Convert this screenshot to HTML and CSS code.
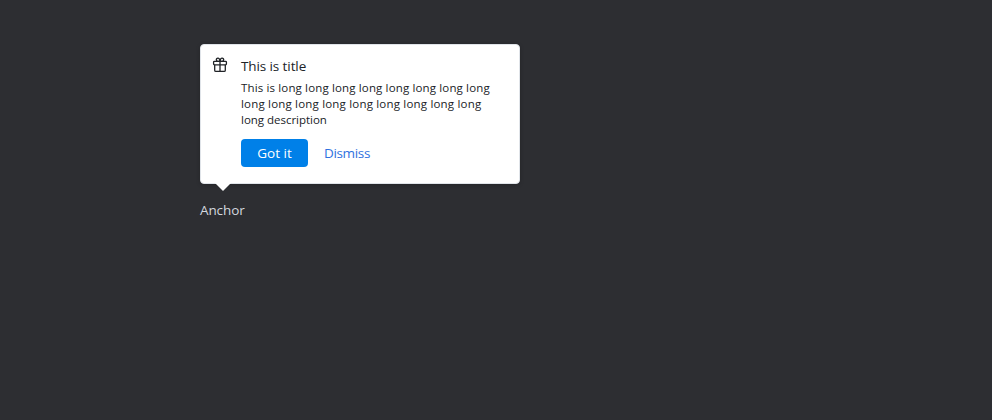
FILE: index.html
```html
<!DOCTYPE html>
<html lang="en">
<head>
<meta charset="utf-8">
<title>Popover</title>
<link rel="stylesheet" href="styles.css">
</head>
<body>
<main class="stage">
  <section class="popover">
    <svg class="icon" viewBox="0 0 16 16" width="16" height="16" fill="none" stroke="#202327" stroke-width="1.3" stroke-linejoin="round">
      <rect x="1.6" y="4.3" width="12.8" height="3.5" rx=".8"/>
      <path d="M2.7 7.8v5.4c0 .7.5 1.2 1.2 1.2h8.2c.7 0 1.2-.5 1.2-1.2V7.8M8 4.3v10.1M8 4.3H5.7a1.6 1.6 0 1 1 1.7-2.2L8 4.3l.6-2.2a1.6 1.6 0 1 1 1.7 2.2H8"/>
    </svg>
    <div class="content">
      <h1 class="title"><span>This is title</span></h1>
      <p class="description"><span class="l1">This is long long long long long long long long</span><br><span class="l2">long long long long long long long long long</span><br><span class="l3">long description</span></p>
      <div class="actions">
        <button class="btn primary"><span>Got it</span></button>
        <button class="btn link"><span>Dismiss</span></button>
      </div>
    </div>
    <svg class="arrow" viewBox="0 0 16 8" width="16" height="8"><path d="M0 0h16L8 8z" fill="#fff"/></svg>
  </section>
  <div class="anchor"><span>Anchor</span></div>
</main>
</body>
</html>
```
FILE: styles.css
```css
* { box-sizing: border-box; }
body {
  margin: 0;
  background: #2d2e32;
  font-family: "Open Sans", "Noto Sans", sans-serif;
}
.stage { padding: 44px 0 0 200px; }
.popover {
  position: relative;
  display: flex;
  gap: 13px;
  width: 320px;
  height: 140px;
  padding: 12px;
  background: #fff;
  border: 1px solid #e0e4e9;
  border-radius: 4px;
  box-shadow: 0 1px 4px rgba(0, 0, 0, .2);
  color: #202327;
}
.icon { flex: none; margin: 0 0 0 -1px; }
.content { flex: 1; white-space: nowrap; }
.title {
  margin: -1px 0 0;
  font-size: 13.5px;
  line-height: 20px;
  font-weight: 400;
  letter-spacing: -.1px;
}
.description {
  margin: 4px 0 0;
  font-size: 11.5px;
  line-height: 16px;
}
.l1 { letter-spacing: .145px; }
.l2 { letter-spacing: .19px; }
.l3 { letter-spacing: -.02px; }
.actions { display: flex; gap: 16px; margin-top: 11px; }
.btn {
  height: 28px;
  padding: 0;
  border: 0;
  background: none;
  font: 400 13.5px/28px "Open Sans", "Noto Sans", sans-serif;
}
.primary {
  width: 67px;
  border-radius: 4px;
  background: #0080e8;
  color: #fff;
}
.link { color: #2f72e0; letter-spacing: -.35px; }
.arrow { position: absolute; left: 14px; top: 138px; display: block; }
.anchor {
  margin-top: 16px;
  font-size: 13.5px;
  line-height: 20px;
  letter-spacing: -.1px;
  color: #d3d8df;
}
```
